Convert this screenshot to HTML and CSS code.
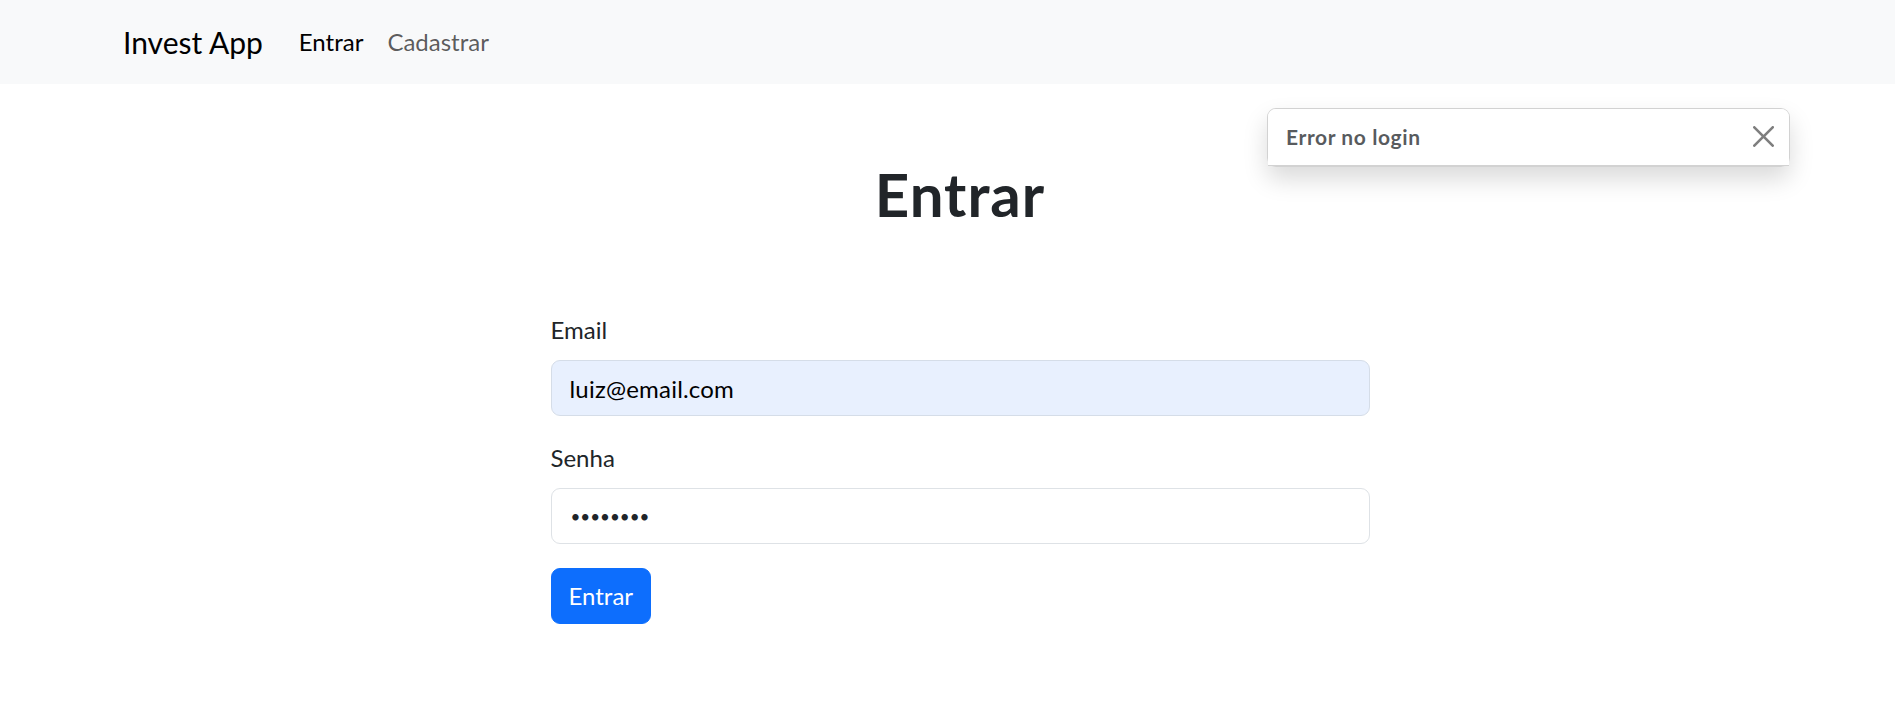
FILE: index.html
```html
<!DOCTYPE html>
<html lang="pt-BR">
<head>
<meta charset="utf-8">
<title>Invest App - Entrar</title>
<link rel="stylesheet" href="styles.css">
</head>
<body>
<div class="page">
  <nav class="navbar">
    <div class="container nav-inner">
      <a class="brand" href="#">Invest App</a>
      <ul class="nav-links">
        <li><a class="nav-link active" href="#">Entrar</a></li>
        <li><a class="nav-link" href="#">Cadastrar</a></li>
      </ul>
    </div>
  </nav>

  <main class="container">
    <h1 class="title">Entrar</h1>
    <div class="row">
      <form class="col">
        <div class="group">
          <label class="label" for="email">Email</label>
          <input class="control autofill" id="email" type="email" value="luiz@email.com">
        </div>
        <div class="group">
          <label class="label" for="senha">Senha</label>
          <input class="control password" id="senha" type="password" value="12345678">
        </div>
        <button class="btn" type="button">Entrar</button>
      </form>
    </div>
  </main>

  <div class="toast">
    <div class="toast-header">
      <strong class="toast-title">Error no login</strong>
      <button class="btn-close" type="button" aria-label="Close">
        <svg viewBox="0 0 16 16" width="21" height="21"><path d="M.293.293a1 1 0 0 1 1.414 0L8 6.586 14.293.293a1 1 0 1 1 1.414 1.414L9.414 8l6.293 6.293a1 1 0 0 1-1.414 1.414L8 9.414l-6.293 6.293a1 1 0 0 1-1.414-1.414L6.586 8 .293 1.707a1 1 0 0 1 0-1.414z"/></svg>
      </button>
    </div>
  </div>
</div>
</body>
</html>
```

FILE: styles.css
```css
html, body {
  margin: 0;
  padding: 0;
  overflow: hidden;
  background: #fff;
}

body {
  font-family: Lato, "Noto Sans", "Liberation Sans", sans-serif;
  font-size: 24px;
  line-height: 1.5;
  color: #212529;
}

.page {
  position: relative;
  width: 1920px;
  min-height: 720px;
}

.container {
  width: 1710px;
  margin: 0 auto;
  padding: 0 18px;
  box-sizing: border-box;
}

/* navbar */
.navbar {
  background: #f8f9fa;
  padding: 12px 0;
}

.nav-inner {
  display: flex;
  align-items: center;
}

.brand {
  font-size: 30px;
  line-height: 45px;
  padding: 7.5px 0;
  margin-right: 24px;
  color: #000;
  text-decoration: none;
}

.nav-links {
  display: flex;
  list-style: none;
  margin: 0;
  padding: 0;
}

.nav-link {
  display: block;
  padding: 12px 12px;
  line-height: 36px;
  font-size: 24px;
  color: rgba(0, 0, 0, 0.65);
  text-decoration: none;
}

.nav-link.active {
  color: #000;
}

/* heading */
.title {
  margin: 74px 0 0;
  font-size: 60px;
  line-height: 72px;
  font-weight: 700;
  letter-spacing: 1px;
  text-align: center;
  color: #212529;
}

/* form */
.row {
  display: flex;
  justify-content: center;
  margin-top: 82px;
}

.col {
  width: 855px;
  padding: 0 18px;
  box-sizing: border-box;
  margin: 0;
}

.group {
  margin-bottom: 24px;
}

.label {
  display: block;
  line-height: 36px;
  margin-bottom: 12px;
  color: #212529;
}

.control {
  display: block;
  width: 100%;
  box-sizing: border-box;
  height: 56px;
  padding: 9px 18px;
  font-family: inherit;
  font-size: 24px;
  line-height: 36px;
  color: #212529;
  background: #fff;
  border: 1px solid #dee2e6;
  border-radius: 9px;
  outline: none;
}

.control.autofill {
  background: #e8f0fe;
  border-color: #d5dde8;
  color: #000;
  letter-spacing: 0.2px;
}

.control.password {
  font-size: 17px;
  padding-left: 19px;
}

.btn {
  display: inline-block;
  height: 56px;
  padding: 9px 17px;
  font-family: inherit;
  font-size: 24px;
  line-height: 36px;
  color: #fff;
  background: #0d6efd;
  border: 1px solid #0d6efd;
  border-radius: 9px;
  cursor: pointer;
}

/* toast */
.toast {
  position: absolute;
  top: 108px;
  right: 130px;
  width: 523px;
  box-sizing: border-box;
  background: rgba(255, 255, 255, 0.85);
  border: 1px solid rgba(0, 0, 0, 0.175);
  border-radius: 9px;
  box-shadow: 0 12px 24px rgba(0, 0, 0, 0.15);
  font-size: 21px;
}

.toast-header {
  display: flex;
  align-items: center;
  padding: 12px 18px;
  color: rgba(33, 37, 41, 0.75);
  background: #fff;
  border-bottom: 1px solid rgba(0, 0, 0, 0.175);
  border-radius: 8px 8px 0 0;
}

.toast-title {
  margin-right: auto;
  font-weight: 700;
  line-height: 31px;
  letter-spacing: 0.6px;
}

.btn-close {
  display: flex;
  align-items: center;
  justify-content: center;
  width: 31.5px;
  height: 31.5px;
  padding: 0;
  margin-right: -8px;
  background: transparent;
  border: 0;
  opacity: 0.5;
  cursor: pointer;
}

.btn-close svg {
  display: block;
  fill: #000;
}
```
